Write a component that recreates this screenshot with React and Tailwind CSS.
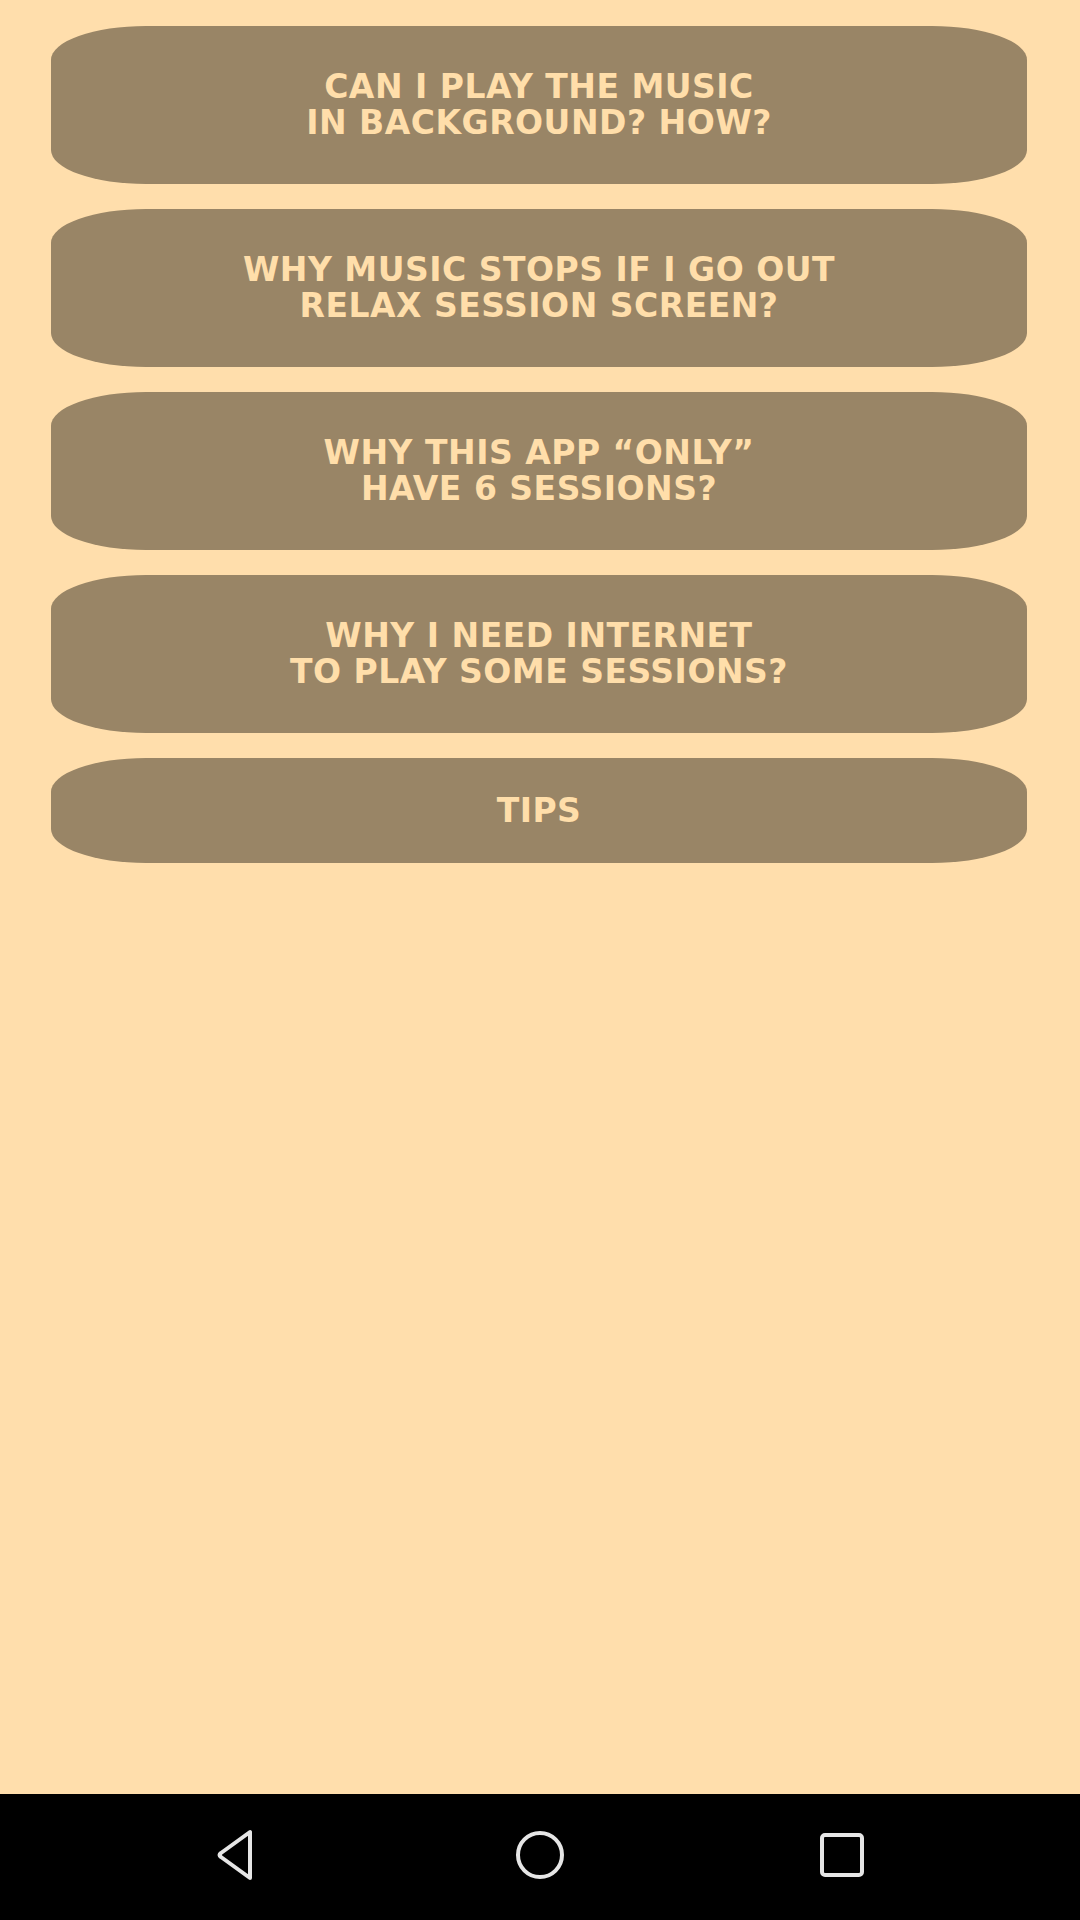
import React from "react";

const questions = [
  ["CAN I PLAY THE MUSIC", "IN BACKGROUND? HOW?"],
  ["WHY MUSIC STOPS IF I GO OUT", "RELAX SESSION SCREEN?"],
  ["WHY THIS APP \u201CONLY\u201D", "HAVE 6 SESSIONS?"],
  ["WHY I NEED INTERNET", "TO PLAY SOME SESSIONS?"],
];

function FaqButton({ lines, tall = true }) {
  return (
    <button
      className={`w-full flex flex-col items-center justify-center bg-[#998566] text-[#FFDEAA] rounded-[95px/34px] ${
        tall ? "h-[158px]" : "h-[105px]"
      }`}
    >
      {lines.map((line) => (
        <span
          key={line}
          className="block text-[33px] leading-[36px] font-bold tracking-[0.5px] [font-family:'DejaVu_Sans',sans-serif]"
        >
          {line}
        </span>
      ))}
    </button>
  );
}

export default function App() {
  return (
    <div className="w-[1080px] h-[1920px] flex flex-col bg-[#FFDEAC]">
      {/* FAQ list */}
      <div className="flex-1 flex flex-col gap-[25px] pt-[26px] pl-[51px] pr-[53px]">
        {questions.map((q) => (
          <FaqButton key={q[0]} lines={q} />
        ))}
        <FaqButton lines={["TIPS"]} tall={false} />
      </div>

      {/* Android nav bar */}
      <div className="h-[126px] bg-black flex items-center justify-center gap-[250px] pb-[4px]">
        <svg width="52" height="52" viewBox="0 0 52 52" fill="none">
          <path
            d="M38 3 L38 49 L9 28 Q6 26 9 24 Z"
            stroke="#e6e6e6"
            strokeWidth="4"
            strokeLinejoin="round"
          />
        </svg>
        <svg width="52" height="52" viewBox="0 0 52 52" fill="none">
          <ellipse cx="26" cy="26" rx="22" ry="22" stroke="#e6e6e6" strokeWidth="4" />
        </svg>
        <svg width="52" height="52" viewBox="0 0 52 52" fill="none">
          <rect x="6" y="6" width="40" height="40" rx="3" stroke="#e6e6e6" strokeWidth="4" />
        </svg>
      </div>
    </div>
  );
}
